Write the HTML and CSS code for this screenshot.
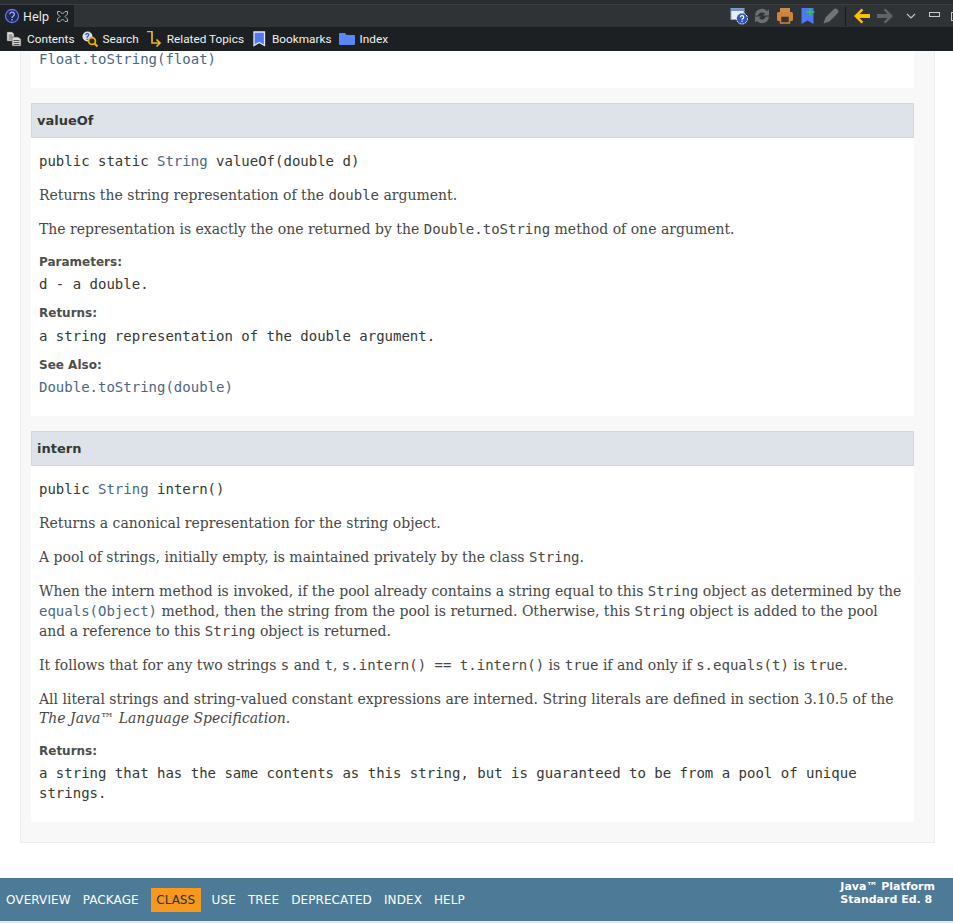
FILE: index.html
```html
<!DOCTYPE html>
<html lang="en">
<head>
    <meta charset="UTF-8">
    <title>Help</title>
    <link rel="stylesheet" href="styles.css">
</head>
<body>
    <div class="top-strip"></div>
    <div class="view-bar">
        <div class="view-tab">
            <svg class="icon" width="16" height="16" viewBox="0 0 16 16"><circle cx="8" cy="8" r="6.500" fill="#1f2a55" stroke="#6475ea" stroke-width="1.300"/><path d="M5.800 6.300a2.300 2.200 0 1 1 3.400 1.900c-.8.500-1.200.9-1.200 1.800" fill="none" stroke="#aab4ff" stroke-width="1.300"/><rect x="7.300" y="11" width="1.400" height="1.400" fill="#aab4ff"/></svg>
            <span>Help</span>
            <svg class="tab-close" width="11" height="11" viewBox="0 0 11 11"><path d="M.5.500h2.500l2.500 2.500L8 .5h2.500V3L8 5.500 10.500 8v2.500H8L5.500 8 3 10.500H.5V8L3 5.500.5 3z" fill="none" stroke="#aeb2b5"/></svg>
        </div>
        <div class="view-actions">
            <svg width="18" height="18" viewBox="0 0 18 18"><rect x="1" y="1.500" width="13" height="11" fill="#e8eef6" stroke="#8fa6c8"/><rect x="1" y="1.500" width="13" height="2.500" fill="#6f93c9"/><circle cx="12" cy="11.500" r="5.500" fill="#2c55b8" stroke="#fff" stroke-dasharray="2 1"/><path d="M10.300 10.200a1.700 1.600 0 1 1 2.500 1.400c-.5.300-.8.500-.8 1.100" fill="none" stroke="#fff" stroke-width="1.200"/><rect x="11.400" y="13.600" width="1.200" height="1.200" fill="#fff"/></svg>
            <svg width="18" height="18" viewBox="0 0 18 18"><path d="M2 8.500a7 7 0 0 1 12-4.500l2-1.500v6h-6l2-2A4.300 4.300 0 0 0 5 8.500zM16 9.500a7 7 0 0 1-12 4.500l-2 1.500v-6h6l-2 2a4.300 4.300 0 0 0 7-2z" fill="#6c7073"/></svg>
            <svg width="18" height="18" viewBox="0 0 18 18"><rect x="4" y="1" width="10" height="4" fill="#d08a4a"/><rect x="1" y="5" width="16" height="9" rx="1.500" fill="#cb8441"/><rect x="4.500" y="9" width="9" height="7" fill="#3a3330" stroke="#cb8441" stroke-width="1.500"/></svg>
            <svg width="18" height="18" viewBox="0 0 18 18"><path d="M2.500 1h12v16l-6-3.500-6 3.500z" fill="#4f79f2"/><path d="M11 1v8M7 5h8.500" stroke="#2fd02f" stroke-width="1.300" fill="none"/></svg>
            <svg width="18" height="18" viewBox="0 0 18 18"><path d="M1.500 16.500l2-6L11.500 2.500a2.300 2.300 0 0 1 4 4L7.500 14.500z" fill="#707477"/></svg>
            <span class="action-sep"></span>
            <svg width="18" height="18" viewBox="0 0 18 18"><path d="M8.500 1.500L1 9l7.500 7.500 1.800-1.800L6.500 11H17V7H6.500l3.800-3.700z" fill="#fcc000"/></svg>
            <svg width="18" height="18" viewBox="0 0 18 18"><path d="M9.500 1.500L17 9l-7.500 7.500-1.800-1.800 3.800-3.700H1V7h10.500L7.700 3.300z" fill="#5f6468"/></svg>
            <svg class="chevron" width="10" height="6" viewBox="0 0 10 6"><path d="M1 1l4 4 4-4" fill="none" stroke="#c4c7c9" stroke-width="1.100"/></svg>
            <span class="minimize"></span>
            <span class="maximize"></span>
        </div>
    </div>
    <div class="nav-bar">
        <div class="nav-item">
            <svg width="16" height="16" viewBox="0 0 16 16"><path d="M1 1h5l2 2v7H1z" fill="#e8e8e8" stroke="#555" stroke-width=".6"/><path d="M2.500 4h4M2.500 6h4M2.500 8h3" stroke="#333" stroke-width=".8"/><path d="M6 6h6l3 2v7H6z" fill="#d8d8d8" stroke="#444" stroke-width=".6"/><path d="M7.500 9.500h6M7.500 11.500h6M7.500 13.500h6" stroke="#333" stroke-width=".8"/></svg>
            <span>Contents</span>
        </div>
        <div class="nav-item">
            <svg width="16" height="16" viewBox="0 0 16 16"><circle cx="5.500" cy="5.500" r="5" fill="#d8def0"/><text class="q-mark" x="3" y="8.500">?</text><circle cx="10" cy="10" r="3.400" fill="#2a2a20" stroke="#e8b000" stroke-width="1.700"/><path d="M12.500 12.500l3 3" stroke="#e8b000" stroke-width="2.200"/></svg>
            <span>Search</span>
        </div>
        <div class="nav-item">
            <svg width="16" height="16" viewBox="0 0 16 16"><path d="M1 .5h5v11.500h8M10.500 8.500L14 12l-3.500 3.500" fill="none" stroke="#eeb422" stroke-width="1.700"/></svg>
            <span>Related Topics</span>
        </div>
        <div class="nav-item">
            <svg width="16" height="16" viewBox="0 0 16 16"><path d="M3 1h10.500v13.500L8.200 11.500 3 14.500z" fill="#4f79f2" stroke="#e4e8ff" stroke-width="1.300"/></svg>
            <span>Bookmarks</span>
        </div>
        <div class="nav-item">
            <svg width="16" height="14" viewBox="0 0 16 14"><path d="M0 2a1 1 0 0 1 1-1h5l1.500 2H15a1 1 0 0 1 1 1v8a1 1 0 0 1-1 1H1a1 1 0 0 1-1-1z" fill="#5b86f5"/></svg>
            <span>Index</span>
        </div>
    </div>

    <div class="content">
        <div class="details">
            <div class="member first">
                <pre class="code"><a>Float.toString(float)</a></pre>
            </div>

            <h4 class="member-name">valueOf</h4>
            <div class="member value-of">
                <pre class="signature">public static <a>String</a> valueOf(double d)</pre>
                <p class="block">Returns the string representation of the <code>double</code> argument.</p>
                <p class="block">The representation is exactly the one returned by the <code>Double.toString</code> method of one argument.</p>
                <div class="label">Parameters:</div>
                <pre class="code">d - a double.</pre>
                <div class="label wide">Returns:</div>
                <pre class="code">a string representation of the double argument.</pre>
                <div class="label">See Also:</div>
                <pre class="code"><a>Double.toString(double)</a></pre>
            </div>

            <h4 class="member-name">intern</h4>
            <div class="member">
                <pre class="signature">public <a>String</a> intern()</pre>
                <p class="block">Returns a canonical representation for the string object.</p>
                <p class="block">A pool of strings, initially empty, is maintained privately by the class <code>String</code>.</p>
                <p class="block">When the intern method is invoked, if the pool already contains a string equal to this <code>String</code> object as determined by the <a><code>equals(Object)</code></a> method, then the string from the pool is returned. Otherwise, this <code>String</code> object is added to the pool and a reference to this <code>String</code> object is returned.</p>
                <p class="block">It follows that for any two strings <code>s</code> and <code>t</code>, <code>s.intern()&nbsp;==&nbsp;t.intern()</code> is <code>true</code> if and only if <code>s.equals(t)</code> is <code>true</code>.</p>
                <p class="block short-lines">All literal strings and string-valued constant expressions are interned. String literals are defined in section 3.10.5 of the <cite>The Java™ Language Specification</cite>.</p>
                <div class="label tight">Returns:</div>
                <pre class="code wrap">a string that has the same contents as this string, but is guaranteed to be from a pool of unique strings.</pre>
            </div>
        </div>
    </div>

    <div class="footer">
        <ul class="footer-nav">
            <li>OVERVIEW</li>
            <li>PACKAGE</li>
            <li class="current">CLASS</li>
            <li>USE</li>
            <li>TREE</li>
            <li>DEPRECATED</li>
            <li>INDEX</li>
            <li>HELP</li>
        </ul>
        <div class="about">Java™ Platform<br>Standard Ed. 8</div>
    </div>
    <div class="bottom-strip"></div>
</body>
</html>
```

FILE: styles.css
```css
html, body {
    margin: 0;
    height: 100%;
}
body {
    display: flex;
    flex-direction: column;
    overflow: hidden;
    background: #fff;
    color: #353833;
    font-family: "DejaVu Sans", sans-serif;
    font-size: 14px;
}

/* eclipse view chrome */
.top-strip {
    height: 4px;
    background: #2a2d30;
    border-bottom: 1px solid #3b3f42;
    flex: none;
}
.view-bar {
    height: 22px;
    background: #2f3336;
    display: flex;
    justify-content: space-between;
    overflow: hidden;
    flex: none;
}
.view-tab {
    width: 74px;
    box-sizing: border-box;
    background: #1d2125;
    color: #f0f0f0;
    display: flex;
    align-items: center;
    padding-left: 4px;
    font-family: "Noto Sans", sans-serif;
    font-size: 12px;
}
.view-tab span {
    margin-left: 3px;
}
.tab-close {
    margin-left: 8px;
}
.view-actions {
    display: flex;
    align-items: center;
    gap: 5px;
}
.action-sep {
    width: 1px;
    height: 19px;
    background: #17191b;
    margin: 0 2px 0 0;
}
.chevron {
    margin: 0 4px 0 7px;
}
.minimize {
    width: 9px;
    height: 3px;
    border: 1px solid #c8cbcd;
    margin: 0 0 3px 4px;
}
.maximize {
    width: 9px;
    height: 7px;
    border: 1px solid #c8cbcd;
    margin: 0 -9px 0 6px;
}
.nav-bar {
    height: 24px;
    background: #1c2023;
    color: #f0f0f0;
    display: flex;
    align-items: center;
    padding-left: 6px;
    gap: 7px;
    font-family: Roboto, sans-serif;
    font-size: 11.8px;
    flex: none;
}
.nav-item {
    display: flex;
    align-items: center;
    gap: 5px;
}
.q-mark {
    font-size: 9px;
    font-weight: bold;
    fill: #3050b0;
}

/* javadoc body */
.content {
    flex: 1;
    min-height: 0;
    overflow: hidden;
}
.details {
    width: 883px;
    margin: -2px 0 0 20px;
    padding: 0 20px 20px 10px;
    background: #f8f8f8;
    border: 1px solid #ededed;
    border-top: 0;
}
.member {
    background: #fff;
    padding: 13px 8px 19px;
}
.member.first {
    padding-top: 0;
    padding-bottom: 19px;
    margin-bottom: 15px;
}
.member.value-of {
    margin-bottom: 15px;
}
.member-name {
    margin: 0;
    height: 33px;
    line-height: 33px;
    padding: 0 5px;
    background: #dee3e9;
    border: 1px solid #d0d9e0;
    font-size: 13px;
    font-weight: bold;
    color: #353833;
}
pre, code {
    font-family: "DejaVu Sans Mono", monospace;
    font-size: 14px;
}
code {
    line-height: 1;
}
pre {
    margin: 0;
    line-height: 20px;
}
.wrap {
    white-space: pre-wrap;
}
a {
    color: #4a6782;
}
.signature {
    margin-bottom: 14px;
}
.block {
    margin: 0 0 14px;
    font-family: "DejaVu Serif", serif;
    font-size: 14px;
    line-height: 20px;
    color: #474747;
}
.block a code {
    color: #4a6782;
}
.block.short-lines {
    line-height: 19px;
    padding-top: 1px;
    margin-bottom: 15px;
}
.label {
    font-size: 12px;
    font-weight: bold;
    color: #4e4e4e;
    line-height: 16px;
    margin-bottom: 5px;
}
.value-of .label {
    padding-top: 1px;
    margin-bottom: 4px;
}
.value-of .label.wide {
    margin-bottom: 5px;
}
.label.tight {
    margin-bottom: 4px;
}
.code + .label {
    margin-top: 10px;
}

/* bottom navbar */
.footer {
    height: 43px;
    background: #4d7a97;
    color: #fff;
    display: flex;
    justify-content: space-between;
    flex: none;
}
.footer-nav {
    list-style: none;
    margin: 10px 0 0;
    padding: 0;
    display: flex;
    font-size: 12px;
    letter-spacing: .1px;
    height: 24px;
}
.footer-nav li {
    padding: 5px 6px;
    line-height: 14px;
}
.footer-nav .current {
    background: #f8981d;
    color: #253441;
    letter-spacing: 0;
    padding: 5px 5.5px;
    margin: 0 5px 0 6px;
}
.about {
    font-size: 11px;
    font-weight: bold;
    line-height: 13px;
    padding: 2px 18px 0 0;
}
.bottom-strip {
    height: 2px;
    background: #e4e7ee;
    flex: none;
}
```
